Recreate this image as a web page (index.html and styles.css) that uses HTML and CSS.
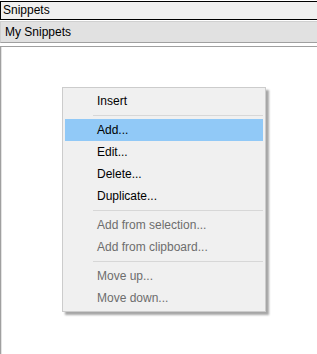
FILE: index.html
```html
<!DOCTYPE html>
<html lang="en">
<head>
  <meta charset="UTF-8" />
  <title>Snippets</title>
  <link rel="stylesheet" href="styles.css">
</head>
<body>
  <div class="window">
    <div class="title-bar">Snippets</div>
    <div class="group-bar">My Snippets</div>
    <div class="list-panel">
      <ul class="context-menu">
        <li class="item">Insert</li>
        <li class="separator"></li>
        <li class="item active">Add...</li>
        <li class="item">Edit...</li>
        <li class="item">Delete...</li>
        <li class="item">Duplicate...</li>
        <li class="separator"></li>
        <li class="item disabled">Add from selection...</li>
        <li class="item disabled">Add from clipboard...</li>
        <li class="separator"></li>
        <li class="item disabled">Move up...</li>
        <li class="item disabled">Move down...</li>
      </ul>
    </div>
  </div>
</body>
</html>
```

FILE: styles.css
```css
html, body {
  margin: 0;
  padding: 0;
  background: #fff;
  height: 100%;
  overflow: hidden;
}
body {
  font-family: "Liberation Sans", Arial, sans-serif;
  font-size: 12px;
  color: #000;
}
.window {
  padding-top: 1px;
  height: 100%;
  box-sizing: border-box;
  display: flex;
  flex-direction: column;
}
.title-bar {
  height: 17px;
  line-height: 17px;
  padding-left: 2px;
  margin-right: -2px;
  background: #f0f0f0;
  border: 1px solid #000;
}
.group-bar {
  margin-top: 1px;
  height: 20px;
  line-height: 20px;
  padding-left: 4px;
  margin-right: -2px;
  background: #e1e1e1;
  border: 1px solid #d0d0d0;
  border-bottom-color: #a0a0a0;
}
.list-panel {
  position: relative;
  flex: 1;
  margin-top: 3px;
  margin-right: -2px;
  border-top: 1px solid #a0a0a0;
  border-left: 1px solid #a0a0a0;
  box-shadow: inset 1px 0 #e3e3e3;
}
.context-menu {
  position: absolute;
  left: 61px;
  top: 40px;
  width: 198px;
  margin: 0;
  padding: 2px;
  list-style: none;
  background: #f0f0f0;
  border: 1px solid #cccccc;
  box-shadow: 3px 3px 2px rgba(0, 0, 0, 0.35);
}
.item {
  height: 22px;
  line-height: 22px;
  padding-left: 32px;
}
.item.active {
  background: #91c9f7;
}
.item.disabled {
  color: #6d6d6d;
}
.separator {
  height: 7px;
  margin-left: 28px;
  position: relative;
}
.separator::after {
  content: "";
  position: absolute;
  left: 0;
  right: 0;
  top: 3px;
  border-top: 1px solid #d7d7d7;
}
```
